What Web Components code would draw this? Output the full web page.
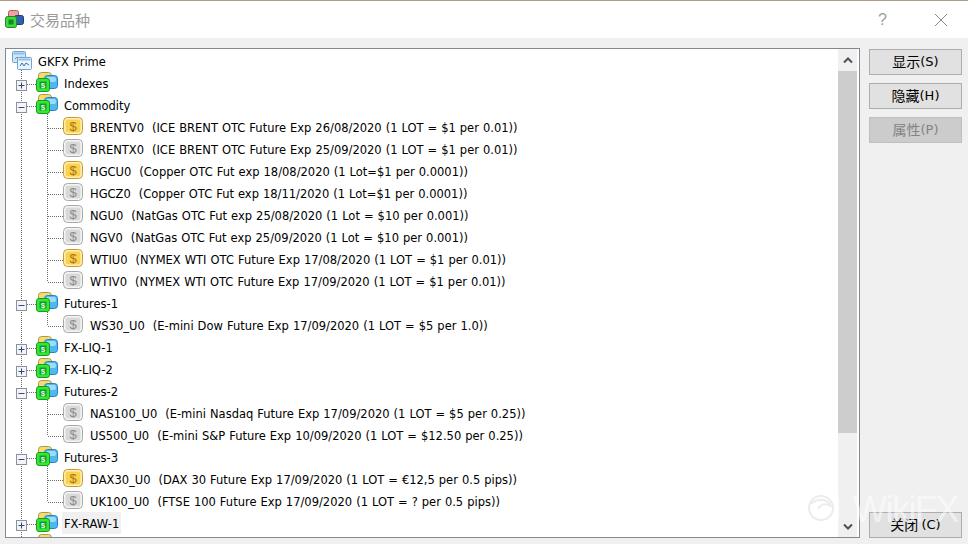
<!DOCTYPE html>
<html>
<head>
<meta charset="utf-8">
<title>交易品种</title>
<style>
  html, body { margin: 0; height: 100%; }
  body { background: #f0f0f0; font-family: "DejaVu Sans", "Noto Sans CJK SC", sans-serif; overflow: hidden; }
</style>
</head>
<body>
<symbols-dialog>
  <tree-row kind="root" label="GKFX Prime"></tree-row>
  <tree-row kind="group" label="Indexes"></tree-row>
  <tree-row kind="group" open label="Commodity"></tree-row>
  <tree-row kind="item" on label="BRENTV0  (ICE BRENT OTC Future Exp 26/08/2020 (1 LOT = $1 per 0.01))"></tree-row>
  <tree-row kind="item" label="BRENTX0  (ICE BRENT OTC Future Exp 25/09/2020 (1 LOT = $1 per 0.01))"></tree-row>
  <tree-row kind="item" on label="HGCU0  (Copper OTC Fut exp 18/08/2020 (1 Lot=$1 per 0.0001))"></tree-row>
  <tree-row kind="item" label="HGCZ0  (Copper OTC Fut exp 18/11/2020 (1 Lot=$1 per 0.0001))"></tree-row>
  <tree-row kind="item" label="NGU0  (NatGas OTC Fut exp 25/08/2020 (1 Lot = $10 per 0.001))"></tree-row>
  <tree-row kind="item" label="NGV0  (NatGas OTC Fut exp 25/09/2020 (1 Lot = $10 per 0.001))"></tree-row>
  <tree-row kind="item" on label="WTIU0  (NYMEX WTI OTC Future Exp 17/08/2020 (1 LOT = $1 per 0.01))"></tree-row>
  <tree-row kind="item" last label="WTIV0  (NYMEX WTI OTC Future Exp 17/09/2020 (1 LOT = $1 per 0.01))"></tree-row>
  <tree-row kind="group" open label="Futures-1"></tree-row>
  <tree-row kind="item" last label="WS30_U0  (E-mini Dow Future Exp 17/09/2020 (1 LOT = $5 per 1.0))"></tree-row>
  <tree-row kind="group" label="FX-LIQ-1"></tree-row>
  <tree-row kind="group" label="FX-LIQ-2"></tree-row>
  <tree-row kind="group" open label="Futures-2"></tree-row>
  <tree-row kind="item" label="NAS100_U0  (E-mini Nasdaq Future Exp 17/09/2020 (1 LOT = $5 per 0.25))"></tree-row>
  <tree-row kind="item" last label="US500_U0  (E-mini S&amp;P Future Exp 10/09/2020 (1 LOT = $12.50 per 0.25))"></tree-row>
  <tree-row kind="group" open label="Futures-3"></tree-row>
  <tree-row kind="item" on label="DAX30_U0  (DAX 30 Future Exp 17/09/2020 (1 LOT = €12,5 per 0.5 pips))"></tree-row>
  <tree-row kind="item" last label="UK100_U0  (FTSE 100 Future Exp 17/09/2020 (1 LOT = ? per 0.5 pips))"></tree-row>
  <tree-row kind="group" selected label="FX-RAW-1"></tree-row>
  <tree-row kind="group" label=""></tree-row>
  <dialog-button slot="actions">显示<small>(S)</small></dialog-button>
  <dialog-button slot="actions">隐藏<small>(H)</small></dialog-button>
  <dialog-button slot="actions" disabled>属性<small>(P)</small></dialog-button>
  <dialog-button slot="close">关闭 <small>(C)</small></dialog-button>
</symbols-dialog>

<script>
const FOLDER_ICON = `
  <svg width="22" height="20" viewBox="0 0 22 20">
    <rect x="2.5" y="0.5" width="13" height="11" rx="3" fill="#f5dc72" stroke="#ab9a45"/>
    <rect x="8.5" y="3.5" width="13" height="13" rx="3" fill="#4db9f2" stroke="#2b82bb"/>
    <rect x="10" y="5" width="10" height="5" rx="2" fill="#a0dcf8"/>
    <rect x="0.5" y="6.5" width="13" height="13" rx="2.5" fill="#35e835" stroke="#1d9a1d"/>
    <rect x="3.5" y="9.5" width="7" height="7" fill="#11992b"/>
    <text x="7" y="16" font-size="8" font-weight="700" text-anchor="middle" fill="#d8ffd8" font-family="Liberation Sans">$</text>
  </svg>`;

const ROOT_ICON = `
  <svg width="20" height="19" viewBox="0 0 20 19">
    <rect x="0.5" y="0.5" width="13" height="11" rx="1" fill="#cfe6f8" stroke="#6fa4d4"/>
    <rect x="1.5" y="1.5" width="11" height="2" fill="#8fbfe8"/>
    <path d="M3 8l2-2 2 2 2-2 2 1" fill="none" stroke="#5a8fc0"/>
    <rect x="5.5" y="6.5" width="14" height="12" rx="1" fill="#eaf4fc" stroke="#6fa4d4"/>
    <rect x="6.5" y="7.5" width="12" height="2" fill="#8fbfe8"/>
    <path d="M8 15l2-3 2 3 2-3 3 2" fill="none" stroke="#44719c"/>
  </svg>`;

const itemIcon = (on) => {
  const c = on
    ? { edge: "#c89a2c", out: "#fff0b8", fill: "#fcd14f", sign: "#a5761a" }
    : { edge: "#a8a8a8", out: "#f4f4f4", fill: "#d9d9d9", sign: "#8c8c8c" };
  return `
  <svg width="20" height="18" viewBox="0 0 20 18">
    <rect x="0.5" y="0.5" width="19" height="17" rx="4" fill="${c.out}" stroke="${c.edge}"/>
    <rect x="2.5" y="2.5" width="15" height="13" rx="2.5" fill="${c.fill}"/>
    <text x="10" y="14" font-size="13" text-anchor="middle" fill="${c.sign}" font-family="Liberation Sans">$</text>
  </svg>`;
};

const closeIcon = `<svg width="14" height="14" viewBox="0 0 14 14"><path d="M1 1l12 12M13 1L1 13" stroke="#8a8a8a" fill="none"/></svg>`;

class TreeRow extends HTMLElement {
  constructor() {
    super();
    this.attachShadow({ mode: "open" });
    const kind = this.getAttribute("kind");
    const open = this.hasAttribute("open");
    const last = this.hasAttribute("last");

    // connector lines, one svg per row so the rows stay plain flow
    let lines = "";
    let box = "";
    if (kind === "group") {
      lines += `<path d="M15.5 0V22M21 12.5H30"/>`;
      if (open) lines += `<path d="M41.5 20V22"/>`;
      box = `<rect x="10.5" y="8.5" width="10" height="10" fill="#f4f4f6" stroke="#8f8f9c"/>
             <path d="M12.5 13.5h6${open ? "" : "M15.5 10.5v6"}" stroke="#2b4a86" fill="none"/>`;
    } else if (kind === "item") {
      lines += `<path d="M15.5 0V22M41.5 0V${last ? 12 : 22}M42 12.5H57"/>`;
    } else {
      lines += `<path d="M15.5 20V22"/>`;
    }

    let icon = ROOT_ICON;
    if (kind === "group") icon = FOLDER_ICON;
    if (kind === "item") icon = itemIcon(this.hasAttribute("on"));

    this.shadowRoot.innerHTML = `
    <style>
      :host { display: flex; align-items: center; height: 22px; position: relative; white-space: pre; }
      .lines { position: absolute; left: 0; top: 0; }
      .lines path:not([stroke]) { stroke: #6e6e6e; stroke-dasharray: 1 1; fill: none; }
      .icon { display: flex; position: relative; }
      :host([kind="root"]) .icon { margin-left: 6px; margin-top: -1px; }
      :host([kind="group"]) .icon { margin-left: 30px; margin-top: -2px; }
      :host([kind="item"]) .icon { margin-left: 57px; margin-top: -2px; }
      .label { font-size: 11.5px; word-spacing: .35px; line-height: 24px; height: 22px; color: #000; padding: 0 2px; }
      :host([kind="root"]) .label { margin-left: 4px; }
      :host([kind="group"]) .label { margin-left: 4px; }
      :host([kind="item"]) .label { margin-left: 5px; }
      :host([selected]) .label { background: #f0f0f0; }
    </style>
    <svg class="lines" width="70" height="22">${lines}${box}</svg>
    <span class="icon">${icon}</span>
    <span class="label">${this.getAttribute("label")}</span>
    `;
  }
}

class DialogButton extends HTMLElement {
  constructor() {
    super();
    this.attachShadow({ mode: "open" });
    this.shadowRoot.innerHTML = `
    <style>
      :host { display: flex; align-items: center; justify-content: center; box-sizing: border-box; height: 26px;
        background: #e1e1e1; border: 1px solid #adadad; color: #000; padding-bottom: 2px; white-space: pre;
        font: 14px "Noto Sans CJK SC", sans-serif; position: relative; }
      :host([disabled]) { background: #cccccc; border-color: #bfbfbf; color: #838383; }
      ::slotted(small) { font: 13px "DejaVu Sans", sans-serif; }
    </style>
    <slot></slot>
    `;
  }
}

class SymbolsDialog extends HTMLElement {
  constructor() {
    super();
    this.attachShadow({ mode: "open" });
    this.shadowRoot.innerHTML = `
    <style>
      :host { display: flex; flex-direction: column; width: 968px; height: 544px; position: relative; overflow: hidden; }
      .titlebar { display: flex; align-items: center; height: 38px; box-sizing: border-box; flex: none;
        background: #fff; border-top: 1px solid #ad9f86; padding: 0 20px 0 5px; }
      .titlebar .logo { display: flex; margin-right: 5px; margin-top: -2px; }
      .titlebar h1 { margin: 0; flex: 1; font: 400 15px "Noto Sans CJK SC", sans-serif; color: #9a9a9a; }
      .help { font: 16px "Liberation Sans", sans-serif; color: #a0a0a0; margin-right: 47px; }
      .main { flex: 1; display: flex; gap: 9px; padding: 10px 6px 6px 5px; min-height: 0; }
      .panel { flex: 1; display: flex; border: 1px solid #828790; background: #fff; min-width: 0; overflow: hidden; }
      .tree { flex: 1; overflow: hidden; padding-top: 1px; }
      .scrollbar { width: 19px; flex: none; margin-right: 2px; background: #f0f0f0; display: flex; flex-direction: column; }
      .arrow { height: 22px; display: flex; align-items: center; justify-content: center; flex: none; }
      .thumb { height: 362px; background: #cdcdcd; flex: none; }
      .gap { flex: 1; }
      .side { width: 93px; flex: none; display: flex; flex-direction: column; padding-top: 1px; }
      .actions { display: flex; flex-direction: column; gap: 8px; }
      .spacer { flex: 1; }
      .watermark { position: absolute; left: 803px; top: 488px; display: flex; align-items: flex-start; gap: 14px; pointer-events: none; }
      .watermark span { font: 36px/36px "Liberation Sans", sans-serif; color: rgba(255,255,255,.55); letter-spacing: -1.5px; margin-top: 4px; }
    </style>
    <div class="titlebar">
      <span class="logo">
        <svg width="20" height="18" viewBox="0 0 20 18">
          <rect x="3.5" y="0.5" width="10" height="8" rx="2" fill="#f0a0a0" stroke="#a86060"/>
          <rect x="9.5" y="5.5" width="9" height="9" rx="2" fill="#2e62b0" stroke="#1c3c78"/>
          <rect x="0.5" y="6.5" width="11" height="11" rx="2" fill="#3fd83f" stroke="#1e8a1e"/>
          <rect x="3.5" y="9.5" width="5" height="5" fill="#128a28"/>
        </svg>
      </span>
      <h1>交易品种</h1>
      <span class="help">?</span>
      ${closeIcon}
    </div>
    <div class="main">
      <div class="panel">
        <div class="tree"><slot></slot></div>
        <div class="scrollbar">
          <div class="arrow"><svg width="10" height="7" viewBox="0 0 10 7"><path d="M1 5.5l4-4 4 4" fill="none" stroke="#505050" stroke-width="2"/></svg></div>
          <div class="thumb"></div>
          <div class="gap"></div>
          <div class="arrow"><svg width="10" height="7" viewBox="0 0 10 7"><path d="M1 1.5l4 4 4-4" fill="none" stroke="#505050" stroke-width="2"/></svg></div>
        </div>
      </div>
      <div class="side">
        <div class="actions"><slot name="actions"></slot></div>
        <div class="spacer"></div>
        <slot name="close"></slot>
      </div>
    </div>
    <div class="watermark">
      <svg width="36" height="40" viewBox="0 0 36 40">
        <rect x="0" y="0" width="36" height="40" rx="9" fill="rgba(255,255,255,.55)"/>
        <circle cx="18" cy="20" r="12" fill="none" stroke="#ececec" stroke-width="2"/>
        <path d="M8 16c6-6 16-6 20 2-5-3-10-2-13 3" fill="none" stroke="#ececec" stroke-width="2"/>
      </svg>
      <span>WikiFX</span>
    </div>
    `;
  }
}

customElements.define("tree-row", TreeRow);
customElements.define("dialog-button", DialogButton);
customElements.define("symbols-dialog", SymbolsDialog);
</script>
</body>
</html>
